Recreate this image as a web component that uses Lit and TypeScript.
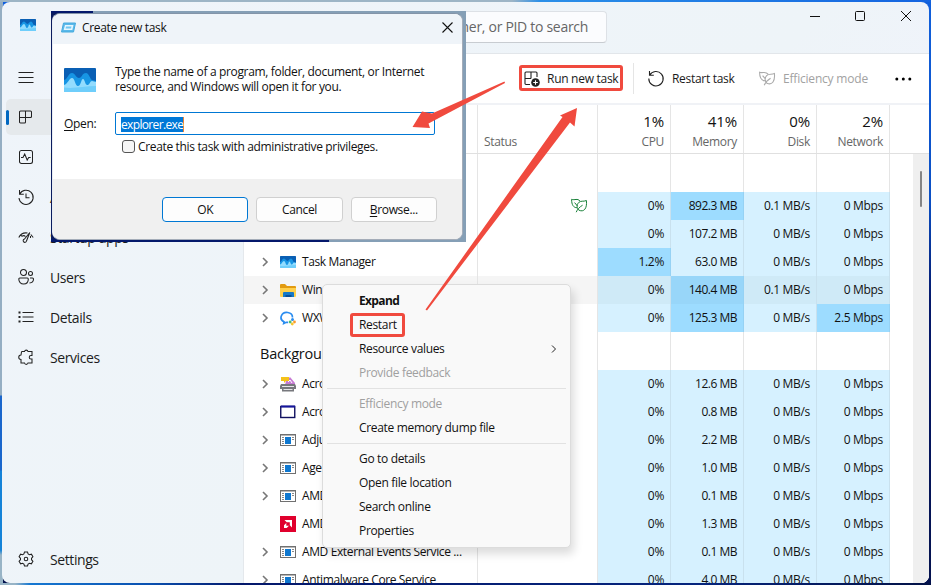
import { LitElement, html, css, svg, nothing } from "lit";
import { customElement } from "lit/decorators.js";
import { classMap } from "lit/directives/class-map.js";

type Row = { name: string; icon: string; cells: string[]; heat?: number[]; leaf?: boolean; hover?: boolean; flat?: boolean };

const APPS: Row[] = [
  { name: "Google Chrome", icon: "app", cells: ["0%", "892.3 MB", "0.1 MB/s", "0 Mbps"], heat: [1], leaf: true },
  { name: "Notepad", icon: "app", cells: ["0%", "107.2 MB", "0 MB/s", "0 Mbps"] },
  { name: "Task Manager", icon: "taskmgr", cells: ["1.2%", "63.0 MB", "0 MB/s", "0 Mbps"], heat: [0] },
  { name: "Windows Explorer", icon: "folder", cells: ["0%", "140.4 MB", "0.1 MB/s", "0 Mbps"], heat: [1], hover: true },
  { name: "WXWork", icon: "wx", cells: ["0%", "125.3 MB", "0 MB/s", "2.5 Mbps"], heat: [1, 3] },
];

const BACKGROUND: Row[] = [
  { name: "Acrobat Distiller", icon: "printer", cells: ["0%", "12.6 MB", "0 MB/s", "0 Mbps"] },
  { name: "Acrobat Update", icon: "frame", cells: ["0%", "0.8 MB", "0 MB/s", "0 Mbps"] },
  { name: "Adjust Service", icon: "app", cells: ["0%", "2.2 MB", "0 MB/s", "0 Mbps"] },
  { name: "Agent Service", icon: "app", cells: ["0%", "1.0 MB", "0 MB/s", "0 Mbps"] },
  { name: "AMD Crash Service", icon: "app", cells: ["0%", "0.1 MB", "0 MB/s", "0 Mbps"] },
  { name: "AMD Software", icon: "amd", cells: ["0%", "1.3 MB", "0 MB/s", "0 Mbps"], flat: true },
  { name: "AMD External Events Service ...", icon: "app", cells: ["0%", "0.1 MB", "0 MB/s", "0 Mbps"] },
  { name: "Antimalware Core Service", icon: "app", cells: ["0%", "4.0 MB", "0 MB/s", "0 Mbps"] },
];

const waves = svg`
  <rect width="32" height="24" rx="1" fill="#0a5fb4"/>
  <path d="M0 12C4 11 4 5 8 5c3 0 4 5 7 5s3-5 7-5c3 0 4 6 6 7l4 1V24H0Z" fill="#1795e4"/>
  <path d="M0 17C4 16 5 10 8 10c3 0 3 8 6 8s3-7 5-7 2 7 5 6c2-1 2-4 4-4l4 1V24H0Z" fill="#93dcfe"/>
  <path d="M0 19.500C10 21 20 18 32 18V24H0Z" fill="#6fcefb"/>`;

const glyphs: Record<string, unknown> = {
  menu: svg`<path d="M.5 3.500h15M.5 8.500h15M.5 13.500h15"/>`,
  processes: svg`<path d="M2.500 2h10a1 1 0 0 1 1 1v4.500a1 1 0 0 1-1 1h-11M7.500 2v11a1 1 0 0 1-1 1h-4a1 1 0 0 1-1-1V3a1 1 0 0 1 1-1"/>`,
  performance: svg`<rect x="1.500" y="1.500" width="13" height="13" rx="2"/><path d="M3 8.500h2l1.700-3.500 2.500 6 1.500-2.500h2"/>`,
  history: svg`<path d="M1.500 1v4.300h4.300M1.700 5.200A7.100 7.100 0 1 1 1 9M8 4.500v4.300h3.500"/>`,
  startup: svg`<path d="M.8 8.500C3 4 6 3.500 9.500 4M12.800 5.500l2.400 3M2.500 5.500 4 7.500M11.800 3.500 8.500 12a1.700 1.700 0 1 1-2-2l5.300-6.500M7.500 7.500c-1-1-2.500-1-3.500-.2M12.500 7v2"/>`,
  users: svg`<circle cx="5.500" cy="3.500" r="3"/><circle cx="12.500" cy="4.500" r="2"/><path d="M1.800 9h7.500a1 1 0 0 1 1 1c0 3-1.800 5-4.700 5S.8 13 .8 10a1 1 0 0 1 1-1zM12 9h2.500a1 1 0 0 1 1 1c0 2.500-1.500 3.800-4 4"/>`,
  details: svg`<path d="M4.500 3.500h11M4.500 8h11M4.500 12.500h11"/><path d="M.5 3.500h2M.5 8h2M.5 12.500h2" stroke-width="2"/>`,
  services: svg`<path d="M4 2.500h2.500a1.800 1.800 0 0 1 3.500 0h4v4h-1a1.700 1.700 0 1 0 0 3.500h1v4h-4a1.800 1.800 0 0 1-3.500 0H3v-3.500a2 2 0 0 1 0-4.500L3.500 3z"/>`,
  settings: svg`<path d="M6.500 1h3l.6 2 1.300.7 2-.5 1.500 2.600-1.400 1.500v1.400l1.400 1.500-1.500 2.600-2-.5-1.300.7-.6 2h-3l-.6-2-1.300-.7-2 .5L1.100 10.200l1.400-1.500V7.300L1.100 5.800l1.500-2.600 2 .5L5.900 3z"/><circle cx="8" cy="8" r="1.800"/>`,
  restart: svg`<path d="M1.500 0v4.300h4.300M1.700 4.200A7.200 7.200 0 1 1 .8 7.500"/>`,
  leaf: svg`<path d="M6 9.800C2.500 9.600.6 7 .6 1.300 3.800 2.600 6.300-.2 9.100 3.200M3.600 4.600l3 3.600M15.400 2.500C12.300 4 10 2.200 7.600 4.600 5.400 7 5.800 10.500 8 12.200c4.800 2.200 8.300-1.500 7.400-9.700zM5.200 14.200C6.300 11.500 8.500 9 11.600 7.200"/>`,
};

const glyph = (name: string, cls = "") => html`<svg class="glyph ${cls}" viewBox="0 0 16 16">${glyphs[name]}</svg>`;

const appIcons: Record<string, unknown> = {
  taskmgr: html`<svg width="16" height="12" viewBox="0 0 32 24">${waves}</svg>`,
  folder: html`<svg width="16" height="15" viewBox="0 0 16 15"><path d="M0 2a1 1 0 0 1 1-1h4l2 2h8a1 1 0 0 1 1 1v9H0z" fill="#e29b10"/><path d="M0 5h16v8a1 1 0 0 1-1 1H1a1 1 0 0 1-1-1z" fill="#ffd04c"/><path d="M3 10a1 1 0 0 1 1-1h9a1 1 0 0 1 1 1v4H3z" fill="#1679c8"/><path d="M5.500 12h6v2h-6z" fill="#0b4f96"/></svg>`,
  wx: html`<svg width="16" height="15" viewBox="0 0 16 15"><path d="M12.500 6.500a5.700 5 0 1 0-8.500 4.300L3.700 12.500l2.500-1.200 2 .1" fill="none" stroke="#2b8df0" stroke-width="1.700"/><circle cx="12.500" cy="8.500" r="1.500" fill="#2b8df0"/><circle cx="14.500" cy="11" r="1.400" fill="#fb9a2b"/><circle cx="12.300" cy="13" r="1.400" fill="#f7c52d"/><circle cx="10.200" cy="11" r="1.400" fill="#4bc06b"/></svg>`,
  printer: html`<svg width="16" height="16" viewBox="0 0 16 16"><path d="M6 5 10 1l5 6v2H5z" fill="#c77bd4"/><path d="M8 6l2-2 2 3" fill="none" stroke="#fff"/><path d="M1 1h8v4H6L4 7V5H1z" fill="#f5c219"/><path d="M1 8h14l1 2v3h-2v2.500H2V13H0v-3z" fill="#77787d"/><path d="M2 10.500h12M3.500 13.500h9" stroke="#e6e6e8"/></svg>`,
  frame: html`<svg width="16" height="14" viewBox="0 0 16 14"><rect x=".75" y="1.500" width="14" height="11" fill="#fff" stroke="#101060" stroke-width="1.400"/><path d="M1 1.500h14" stroke="#15159c" stroke-width="2"/></svg>`,
  app: html`<svg width="16" height="12" viewBox="0 0 16 12"><rect x=".5" y=".5" width="15" height="11" fill="#fff" stroke="#707070"/><path d="M0 1h16" stroke="#707070"/><rect x="5" y="3" width="6" height="7" fill="#0f78d0"/><path d="M2 3.500h2M2 5.500h2M2 7.500h2M2 9.500h2M12 3.500h2M12 5.500h2" stroke="#888"/></svg>`,
  amd: html`<svg width="16" height="16" viewBox="0 0 16 16"><rect width="16" height="16" fill="#e0002d"/><path d="M4.500 4h7.500v7.500l-2.200-2.200V6.200H6.700z" fill="#fff"/><path d="M6.300 7 4 9.300V12h2.700L9 9.700H6.300z" fill="#fff"/></svg>`,
};

@customElement("tm-sidebar")
class TmSidebar extends LitElement {
  static styles = css`
    :host { display: flex; flex-direction: column; width: 241px; flex: none; box-sizing: border-box; padding: 57px 4px 4px; font-size: 14px; }
    .item { display: flex; align-items: center; height: 36px; margin-bottom: 4px; border-radius: 5px; color: #1c1c1c; letter-spacing: -0.41px; }
    .selected { background: #e5e9ec; }
    .bar { width: 3px; height: 15px; border-radius: 2px; margin-right: 9px; }
    .selected .bar { background: #0067c0; }
    .glyph { width: 16px; height: 16px; fill: none; stroke: #222; stroke-width: 1.050; margin-right: 16px; overflow: visible; }
    .spacer { flex: 1; }
    .last { margin-bottom: 2px; }
  `;
  item(icon: string, label = "", selected = false, last = false) {
    return html`<div class=${classMap({ item: true, selected, last })}><span class="bar"></span>${glyph(icon)}<span class="label">${label}</span></div>`;
  }
  render() {
    return html`${this.item("menu")}${this.item("processes", "Processes", true)}${this.item("performance", "Performance")}
      ${this.item("history", "App history")}${this.item("startup", "Startup apps")}${this.item("users", "Users")}
      ${this.item("details", "Details")}${this.item("services", "Services")}<div class="spacer"></div>${this.item("settings", "Settings", false, true)}`;
  }
}

@customElement("tm-table")
class TmTable extends LitElement {
  static styles = css`
    :host { display: block; flex: 1; min-height: 0; overflow: hidden; background: #fff; color: #111; letter-spacing: -0.32px; }
    .cols { display: grid; grid-template-columns: 234px 120px repeat(4, 73px); width: 646px; }
    .cols > div { border-right: 1px solid #e5e5e5; box-sizing: border-box; }
    .head { width: 685px; height: 49px; border-bottom: 1px solid #e0e0e0; box-sizing: border-box; grid-template-columns: 234px 120px repeat(4, 73px) 39px; }
    .head > div:last-child { border-right: 0; }
    .stat { text-align: right; padding: 5px 6px 0 0; color: #666; }
    .pct { font-size: 15px; line-height: 22px; color: #111; letter-spacing: -0.1px; }
    .sub { line-height: 18px; padding-top: 1px; }
    .status { padding: 28px 0 0 6px; line-height: 18px; color: #666; }
    .scroller { display: flex; }
    .track { width: 16px; margin-left: 23px; background: #efefef; height: 430px; display: flex; justify-content: center; box-sizing: border-box; padding-top: 17px; }
    .thumb { width: 2px; height: 36px; background: #858585; border-radius: 1px; }
    .group { height: 38px; }
    .title { font-size: 14.500px; padding: 9px 0 0 16px; line-height: 25px; letter-spacing: -0.2px; white-space: nowrap; overflow: hidden; }
    .row { height: 28px; }
    .hover { background: #f5f5f5; }
    .name { display: flex; align-items: center; padding-left: 17px; white-space: nowrap; letter-spacing: -0.38px; }
    .label { padding-bottom: 1px; }
    .chev { width: 8px; height: 10px; fill: none; stroke: #777; stroke-width: 1.600; margin-right: 11px; flex: none; }
    .flat .chev { visibility: hidden; }
    .icon { display: flex; width: 16px; margin-right: 6px; flex: none; }
    .cols > .cell { background: #d6f1ff; text-align: right; line-height: 28px; padding-right: 6px; border-right-color: #c9e1ee; }
    .cols > .mem { letter-spacing: -0.5px; }
    .cols > .hot { background: #9ddcff; border-right-color: #96d2f4; }
    .hover > .cell { background: #cfeaf7; }
    .hover > .hot { background: #98d6f9; }
    .leafcell { display: flex; align-items: center; justify-content: flex-end; padding-right: 10px; }
    .glyph { width: 16px; height: 16px; fill: none; stroke: #188038; stroke-width: 1; overflow: visible; }
  `;
  stat(p: string, n: string) {
    return html`<div class="stat"><div class="pct">${p}</div><div class="sub">${n}</div></div>`;
  }
  group(t: string) {
    return html`<div class="cols group"><div class="title">${t}</div><div></div><div></div><div></div><div></div><div></div></div>`;
  }
  row(r: Row) {
    return html`<div class=${classMap({ cols: true, row: true, hover: !!r.hover, flat: !!r.flat })}>
      <div class="name"><svg class="chev" viewBox="0 0 8 10"><path d="M2 1l4 4-4 4"/></svg><span class="icon">${appIcons[r.icon]}</span><span class="label">${r.name}</span></div>
      <div class="leafcell">${r.leaf ? glyph("leaf") : nothing}</div>
      ${r.cells.map((c, i) => html`<div class=${classMap({ cell: true, mem: i === 1, hot: !!r.heat?.includes(i) })}>${c}</div>`)}</div>`;
  }
  render() {
    return html`<div class="cols head"><div></div><div class="status">Status</div>
      ${this.stat("1%", "CPU")}${this.stat("41%", "Memory")}${this.stat("0%", "Disk")}${this.stat("2%", "Network")}<div></div></div>
      <div class="scroller"><div>${this.group("Apps")}${APPS.map((r) => this.row(r))}${this.group("Background processes")}${BACKGROUND.map((r) => this.row(r))}</div>
      <div class="track"><div class="thumb"></div></div></div>`;
  }
}

@customElement("tm-dialog")
class TmDialog extends LitElement {
  static styles = css`
    :host { display: block; box-sizing: border-box; width: 415px; height: 231px; padding: 2px 3px 2px 1px; font-size: 12px; letter-spacing: -0.34px; color: #111;
      background: linear-gradient(#04186b, #04186b) 0 100% / 278px 3px no-repeat, linear-gradient(#04186b, #04186b) 0 0 / 42px 2px no-repeat, linear-gradient(90deg, #0b1c5e 20px, #859fb6 21px); }
    .win { height: 100%; border-radius: 8px; overflow: hidden; display: flex; flex-direction: column; background: #fff; box-sizing: border-box; border: 1px solid #a4acb8; border-left-color: #e8edf3; border-top-color: #8394a8; }
    .title { height: 30px; background: #eff4f9; display: flex; align-items: center; padding: 0 9px 3px 8px; flex: none; box-sizing: border-box; }
    .title span { margin-left: 6px; flex: 1; }
    .close { stroke: #111; stroke-width: 1.100; fill: none; }
    .body { flex: 1; padding: 20px 27px 0 11px; }
    .intro { display: flex; gap: 19px; line-height: 15px; height: 48px; white-space: nowrap; }
    .intro svg { margin-top: 4px; flex: none; }
    .open { display: flex; align-items: center; }
    .open label { width: 51px; }
    .field { flex: 1; height: 23px; box-sizing: border-box; border: 1px solid #0078d4; border-radius: 2px; padding: 3px 5px; }
    .sel { background: #0078d7; color: #fff; display: inline-block; line-height: 15px; height: 15px; border-right: 1px solid #e8833a; letter-spacing: -0.65px; }
    .check { display: flex; align-items: center; gap: 3px; margin: 4px 0 0 58px; height: 14px; white-space: nowrap; }
    .box { width: 11px; height: 11px; border: 1px solid #555; border-radius: 3px; background: #f6f6f6; }
    .foot { height: 60px; background: #f0f0f0; display: flex; gap: 8px; padding: 18px 25px 0 109px; box-sizing: border-box; flex: none; }
    .btn { flex: 1; height: 25px; box-sizing: border-box; border: 1px solid #d0d0d0; border-radius: 4px; background: #fdfdfd; text-align: center; line-height: 23px; }
    .ok { border-color: #0078d4; }
    u { text-underline-offset: 2px; }
  `;
  render() {
    return html`<div class="win">
      <div class="title"><svg width="15" height="12" viewBox="0 0 15 12"><path d="M2.500 1h12l-2 9H.5z" fill="#5bb9ea" stroke="#45aade"/><path d="M4 3h8.500l-1.200 5H2.700z" fill="#e5f7ff"/><path d="M5 4.500h5.500l-.5 2H4.500z" fill="#6fc6f2"/></svg><span>Create new task</span>
        <svg class="close" width="11" height="11" viewBox="0 0 11 11"><path d="M.5.500l10 10M10.500.500l-10 10"/></svg></div>
      <div class="body">
        <div class="intro"><svg width="32" height="24" viewBox="0 0 32 24">${waves}</svg><div>Type the name of a program, folder, document, or Internet<br>resource, and Windows will open it for you.</div></div>
        <div class="open"><label><u>O</u>pen:</label><div class="field"><span class="sel">explorer.exe</span></div></div>
        <div class="check"><span class="box"></span>Create this task with administrative privileges.</div>
      </div>
      <div class="foot"><div class="btn ok">OK</div><div class="btn">Cancel</div><div class="btn"><u>B</u>rowse...</div></div></div>`;
  }
}

@customElement("tm-menu")
class TmMenu extends LitElement {
  static styles = css`
    :host { display: block; box-sizing: border-box; width: 249px; height: 264px; padding: 4px; background: #f9f9f9; border: 1px solid #dcdcdc; border-radius: 5px; box-shadow: 3px 6px 10px rgba(0,0,0,.14); font-size: 12px; letter-spacing: -0.33px; color: #111; }
    .item { height: 24px; line-height: 24px; padding: 0 8px 0 32px; display: flex; justify-content: space-between; align-items: center; }
    .off { color: #a0a0a0; }
    .bold { font-weight: 700; letter-spacing: -0.65px; }
    .sep { height: 1px; margin: 3px 0; background: #e2e2e2; }
    svg { fill: none; stroke: #222; }
  `;
  render() {
    return html`<div class="item bold">Expand</div><div class="item">Restart</div>
      <div class="item">Resource values<svg width="8" height="10" viewBox="0 0 8 10"><path d="M2 1.500 5.500 5 2 8.500"/></svg></div>
      <div class="item off">Provide feedback</div><div class="sep"></div>
      <div class="item off">Efficiency mode</div><div class="item">Create memory dump file</div><div class="sep"></div>
      <div class="item">Go to details</div><div class="item">Open file location</div><div class="item">Search online</div><div class="item">Properties</div>`;
  }
}

@customElement("app-root")
class AppRoot extends LitElement {
  static styles = css`
    :host { display: block; position: relative; box-sizing: border-box; width: 931px; height: 585px; padding: 2px; overflow: hidden; font: 12px "Open Sans", "Noto Sans", sans-serif;
      background: linear-gradient(90deg, #9db5c6 55%, #2a8fe8 58%, #1464e0) 0 0 / 100% 2px no-repeat,
        linear-gradient(90deg, #98b4c6 0 15px, #1678d2 30px, #0a50b0 150px, #04186b 240px, #06257d 700px, #031246) 0 100% / 100% 2px no-repeat,
        linear-gradient(#95aec3 395px, #1a66cc 396px 470px, #1583d8 471px 550px, #98b4c6 555px) 0 0 / 3px 100% no-repeat,
        linear-gradient(#1160dc, #0b4fc4 200px, #04186b 300px, #04124e); }
    .window { height: 581px; width: 927px; border-radius: 8px; overflow: hidden; display: flex; flex-direction: column; background: linear-gradient(135deg, #eff4fa, #eef4f8 55%, #f0f3fc 75%); }
    .titlebar { height: 51px; flex: none; display: flex; align-items: flex-start; }
    .logo { margin: 17px 0 0 18px; }
    .search { margin: 9px 0 0 256px; width: 315px; height: 32px; box-sizing: border-box; border: 1px solid #dde1e6; border-bottom-color: #c8ccd1; border-radius: 4px; background: #fbfcfe; font-size: 14px; line-height: 30px; text-align: right; padding-right: 18px; color: #666; letter-spacing: -0.3px; white-space: nowrap; }
    .controls { display: flex; margin: 7px 17px 0 auto; fill: none; stroke: #111; }
    .main { flex: 1; min-height: 0; display: flex; margin-top: -51px; }
    .panel { flex: 1; min-width: 0; margin-top: 51px; border-left: 1px solid #e4e8ec; border-top: 1px solid #e2e6ea; background: #fff; display: flex; flex-direction: column; }
    .toolbar { height: 49px; flex: none; display: flex; align-items: center; border-bottom: 2px solid #f0f2f6; padding-left: 280px; color: #1a1a1a; }
    .glyph { width: 16px; height: 16px; fill: none; stroke: #222; stroke-width: 1.100; overflow: visible; flex: none; }
    .tool { margin-left: 7px; white-space: nowrap; letter-spacing: -0.28px; flex: none; }
    .run { width: 86px; }
    .divider { width: 1px; height: 31px; background: #e5e5e5; margin-right: 14px; flex: none; }
    .restart { width: 87px; margin-left: 8px; letter-spacing: -0.3px; }
    .grey { stroke: #aaa; }
    .off { color: #a2a2a2; }
    .eff { width: 112px; margin-left: 8px; letter-spacing: -0.2px; }
    .more { flex: none; }
    .dialog { position: absolute; left: 51px; top: 11px; }
    .menu { position: absolute; left: 322px; top: 284px; }
    .marks { position: absolute; left: 0; top: 0; width: 931px; height: 585px; fill: #f04a3e; }
    .marks rect { fill: none; stroke: #f04a3e; stroke-width: 3; }
    tm-sidebar { position: relative; }
  `;
  render() {
    return html`
      <div class="window">
        <div class="titlebar">
          <svg class="logo" width="16" height="12" viewBox="0 0 32 24">${waves}</svg>
          <div class="search">Type a name, publisher, or PID to search</div>
          <svg class="controls" width="105" height="14" viewBox="0 0 105 14"><path d="M3 7.500h10"/><rect x="48.500" y="2.500" width="9" height="9" rx="1"/><path d="M94 2l10 10M104 2 94 12"/></svg>
        </div>
        <div class="main">
          <tm-sidebar></tm-sidebar>
          <div class="panel">
            <div class="toolbar">
              <svg class="glyph" viewBox="0 0 16 16"><path d="M6 13.500H2a1 1 0 0 1-1-1V2a1 1 0 0 1 1-1h10a1 1 0 0 1 1 1v4M1 7.500h6M7 1v6.500"/><circle cx="11.500" cy="11.500" r="4.300" fill="#222" stroke="none"/><path d="M9.200 11.500h4.600M11.500 9.200v4.600" stroke="#fff"/></svg>
              <span class="tool run">Run new task</span><span class="divider"></span>
              ${glyph("restart")}<span class="tool restart">Restart task</span>
              ${glyph("leaf", "grey")}<span class="tool off eff">Efficiency mode</span>
              <svg class="more" width="18" height="4" viewBox="0 0 18 4"><circle cx="1.800" cy="2" r="1.500"/><circle cx="8.300" cy="2" r="1.500"/><circle cx="14.800" cy="2" r="1.500"/></svg>
            </div>
            <tm-table></tm-table>
          </div>
        </div>
      </div>
      <tm-dialog class="dialog"></tm-dialog>
      <tm-menu class="menu"></tm-menu>
      <svg class="marks" viewBox="0 0 931 585">
        <rect x="520.500" y="66.500" width="101" height="23" rx="1.500"/>
        <rect x="351.500" y="314.500" width="52" height="21" rx="1.500"/>
        <path d="M504.500 81.500 432 113.500 422 111.500 412.500 127 430 128 428.500 123.500 505 83z"/>
        <path d="M425.500 309.500 562.500 117 560 115.500 577 108 574.500 126.500 570 122.500 427 310.500z"/>
      </svg>`;
  }
}
